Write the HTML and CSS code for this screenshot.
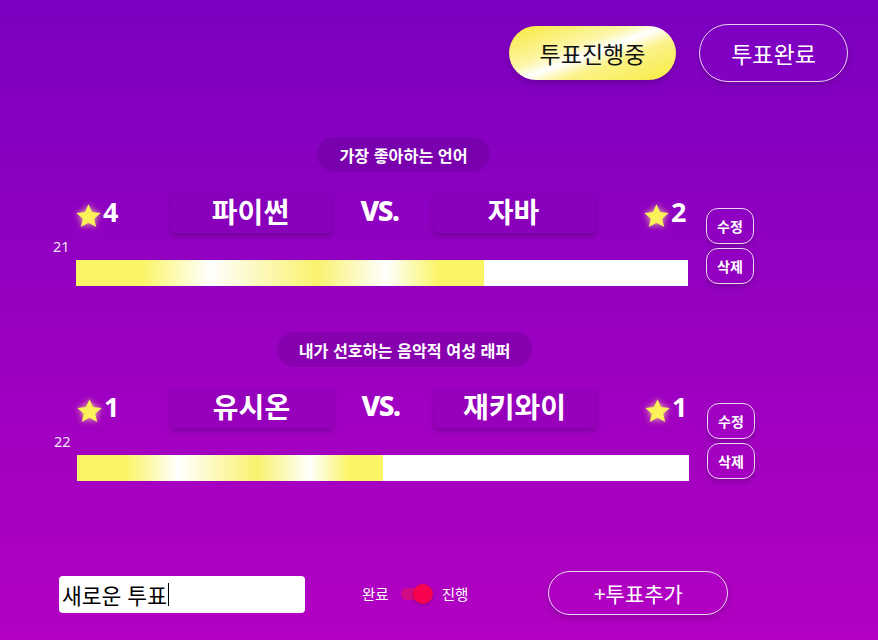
FILE: index.html
```html
<!DOCTYPE html>
<html lang="ko">
<head>
<meta charset="utf-8">
<title>투표</title>
<link rel="stylesheet" href="styles.css">
</head>
<body>
<div class="app">
  <header class="top">
    <button class="btn-on">투표진행중</button>
    <button class="btn-off">투표완료</button>
  </header>

  <section class="poll poll-first">
    <div class="poll-title">가장 좋아하는 언어</div>
    <div class="poll-body">
      <div class="match">
        <div class="score">
          <svg class="star" viewBox="0 0 24 24"><path d="M12 1l3.2 7 7.6.8-5.7 5.1 1.7 7.5L12 17.5l-6.8 3.9 1.7-7.5-5.7-5.1 7.6-.8z"/></svg>
          <span class="pts">4</span>
        </div>
        <div class="versus">
          <div class="cand">파이썬</div>
          <div class="vs">VS.</div>
          <div class="cand">자바</div>
        </div>
        <div class="score">
          <svg class="star" viewBox="0 0 24 24"><path d="M12 1l3.2 7 7.6.8-5.7 5.1 1.7 7.5L12 17.5l-6.8 3.9 1.7-7.5-5.7-5.1 7.6-.8z"/></svg>
          <span class="pts">2</span>
        </div>
      </div>
      <div class="num">21</div>
      <div class="bar"><div class="fill" style="width:66.67%"></div></div>
      <div class="actions">
        <button class="small">수정</button>
        <button class="small">삭제</button>
      </div>
    </div>
  </section>

  <section class="poll poll-second">
    <div class="poll-title">내가 선호하는 음악적 여성 래퍼</div>
    <div class="poll-body">
      <div class="match">
        <div class="score">
          <svg class="star" viewBox="0 0 24 24"><path d="M12 1l3.2 7 7.6.8-5.7 5.1 1.7 7.5L12 17.5l-6.8 3.9 1.7-7.5-5.7-5.1 7.6-.8z"/></svg>
          <span class="pts">1</span>
        </div>
        <div class="versus">
          <div class="cand">유시온</div>
          <div class="vs">VS.</div>
          <div class="cand">재키와이</div>
        </div>
        <div class="score">
          <svg class="star" viewBox="0 0 24 24"><path d="M12 1l3.2 7 7.6.8-5.7 5.1 1.7 7.5L12 17.5l-6.8 3.9 1.7-7.5-5.7-5.1 7.6-.8z"/></svg>
          <span class="pts">1</span>
        </div>
      </div>
      <div class="num">22</div>
      <div class="bar"><div class="fill" style="width:50%"></div></div>
      <div class="actions">
        <button class="small">수정</button>
        <button class="small">삭제</button>
      </div>
    </div>
  </section>

  <footer class="bottom">
    <div class="input"><span class="input-text">새로운 투표</span><span class="caret"></span></div>
    <div class="switch-group">
      <span class="switch-label">완료</span>
      <span class="switch"><span class="track"></span><span class="thumb"></span></span>
      <span class="switch-label">진행</span>
    </div>
    <button class="add">+투표추가</button>
  </footer>
</div>
</body>
</html>
```

FILE: styles.css
```css
* {
  box-sizing: border-box;
  margin: 0;
  padding: 0;
}

html, body {
  width: 878px;
  height: 640px;
}

body {
  overflow: hidden;
  background: linear-gradient(180deg, #7b00c1 0%, #9500c1 45%, #b300c2 100%);
  font-family: "Noto Sans CJK KR", "Noto Sans", sans-serif;
  color: #fff;
}

button {
  font-family: "Noto Sans CJK KR", "Noto Sans", sans-serif;
  cursor: pointer;
  background: none;
}

.app {
  display: flex;
  flex-direction: column;
  height: 100%;
}

/* top buttons */
.top {
  display: flex;
  justify-content: flex-end;
  align-items: flex-start;
  gap: 23px;
  height: 83px;
  padding: 24px 30px 0 0;
}

.btn-on {
  width: 167px;
  height: 54px;
  margin-top: 2px;
  border: none;
  border-radius: 27px;
  background: linear-gradient(160deg, #f8e838 0%, #fdf6a8 38%, #ffffff 50%, #fbf289 64%, #f7ec40 100%);
  color: #111;
  font-size: 23px;
  box-shadow: 0 3px 6px rgba(60, 0, 90, 0.35);
  display: flex;
  align-items: center;
  justify-content: center;
}

.btn-off {
  width: 149px;
  height: 58px;
  border: 1.5px solid #e9d2f0;
  border-radius: 29px;
  color: #fff;
  font-size: 23px;
  box-shadow: 0 3px 6px rgba(60, 0, 90, 0.3);
  display: flex;
  align-items: center;
  justify-content: center;
}

/* polls */
.poll {
  margin-left: 53px;
  width: 701px;
  display: flex;
  flex-direction: column;
  align-items: center;
}

.poll-first {
  margin-top: 54px;
}

.poll-second {
  margin-top: 46px;
  margin-left: 54px;
}

.poll-title {
  height: 35px;
  padding: 0 22px;
  border-radius: 18px;
  background: rgba(70, 0, 110, 0.22);
  font-size: 16.2px;
  font-weight: 700;
  display: flex;
  align-items: center;
}

.poll-body {
  align-self: stretch;
  margin-top: 21px;
  display: grid;
  grid-template-columns: 23px 612px 18px 48px;
  grid-template-rows: 40px 27px 26px;
}

.match {
  grid-column: 2;
  grid-row: 1;
  display: flex;
  justify-content: space-between;
  align-items: center;
}

.score {
  display: flex;
  align-items: center;
  gap: 1px;
  width: 44px;
}

.star {
  width: 27px;
  height: 27px;
  margin-left: -1px;
  margin-top: 6px;
  fill: #fbf25a;
  filter: drop-shadow(0 0 3px rgba(255, 240, 130, 0.85));
}

.pts {
  font-family: "Noto Sans", sans-serif;
  font-weight: 700;
  font-size: 27px;
  line-height: 30px;
  margin-top: -2px;
}

.versus {
  display: flex;
  align-items: center;
  gap: 29px;
}

.cand {
  width: 162px;
  height: 40px;
  border-radius: 4px;
  background: rgba(110, 0, 160, 0.18);
  box-shadow: 0 3px 5px rgba(60, 0, 90, 0.35);
  display: flex;
  align-items: center;
  justify-content: center;
  font-size: 28px;
  font-weight: 700;
  line-height: 1;
  padding-bottom: 4px;
}

.vs {
  width: 43px;
  font-family: "Noto Sans", sans-serif;
  font-weight: 800;
  font-size: 28px;
  letter-spacing: -1.5px;
  line-height: 1;
  margin-top: -7px;
}

.num {
  grid-column: 1;
  grid-row: 2;
  align-self: end;
  font-family: "Noto Sans", sans-serif;
  font-size: 14.5px;
  line-height: 14px;
  margin-bottom: 7px;
  color: #f2e6f6;
}

.bar {
  grid-column: 2;
  grid-row: 3;
  background: #fff;
  overflow: hidden;
}

.fill {
  height: 100%;
  background: linear-gradient(90deg, #fbf565 0%, #fbf565 16%, #ffffff 33%, #f9f26e 59%, #ffffff 76%, #fbf565 89%, #fbf565 100%);
}

.actions {
  grid-column: 4;
  grid-row: 1 / 4;
  display: flex;
  flex-direction: column;
  justify-content: flex-end;
  gap: 4px;
  padding-bottom: 2px;
}

.small {
  width: 48px;
  height: 36px;
  border: 1px solid #ecd6f2;
  border-radius: 12px;
  color: #fff;
  font-size: 14px;
  font-weight: 700;
  box-shadow: 0 3px 5px rgba(60, 0, 90, 0.3);
}

/* bottom bar */
.bottom {
  margin-top: 90px;
  height: 44px;
  display: flex;
  align-items: center;
  padding-left: 59px;
}

.input {
  width: 246px;
  height: 37px;
  background: #fff;
  border-radius: 4px;
  display: flex;
  align-items: center;
  padding-left: 3px;
  color: #000;
  font-size: 21.5px;
  margin-top: 2px;
}

.caret {
  width: 1px;
  height: 23px;
  background: #000;
  margin-left: 1px;
}

.switch-group {
  margin-left: 57px;
  display: flex;
  align-items: center;
  margin-top: 2px;
}

.switch-label {
  font-size: 14.5px;
  line-height: 1;
}

.switch {
  position: relative;
  width: 33px;
  height: 20px;
  margin: 0 9px 0 11px;
}

.track {
  position: absolute;
  left: 1px;
  top: 4px;
  width: 28px;
  height: 12px;
  border-radius: 6px;
  background: #d30c86;
}

.thumb {
  position: absolute;
  right: 0;
  top: 0;
  width: 20px;
  height: 20px;
  border-radius: 50%;
  background: #f8034f;
  box-shadow: 0 1px 3px rgba(60, 0, 60, 0.4);
}

.add {
  margin-left: 80px;
  width: 180px;
  height: 44px;
  border: 1.5px solid #ecd6f2;
  border-radius: 22px;
  color: #fff;
  font-size: 21px;
  box-shadow: 0 3px 6px rgba(60, 0, 90, 0.3);
}
```
